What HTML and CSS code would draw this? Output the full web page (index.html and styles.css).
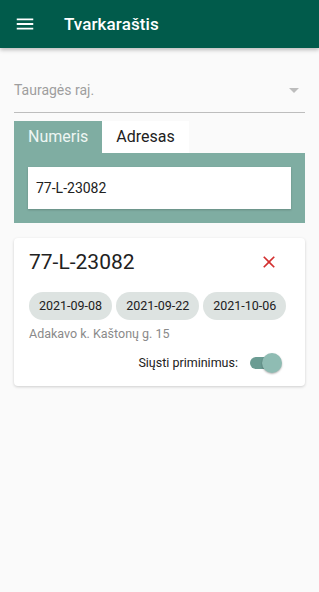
FILE: index.html
```html
<!DOCTYPE html>
<html lang="lt">
<head>
    <meta charset="UTF-8">
    <meta name="viewport" content="width=device-width, initial-scale=1.0">
    <title>Tvarkaraštis</title>
    <link rel="stylesheet" href="styles.css">
</head>
<body>
    <header class="app-bar">
        <svg class="menu-icon" viewBox="0 0 24 24" width="22" height="22">
            <path d="M3 6h18v2H3zM3 11h18v2H3zM3 16h18v2H3z" fill="#fff"/>
        </svg>
        <h1>Tvarkaraštis</h1>
    </header>

    <main class="content">
        <!-- Region select -->
        <div class="select">
            <span class="select-value">Tauragės raj.</span>
            <span class="select-arrow"></span>
        </div>

        <!-- Search tabs -->
        <div class="tabs">
            <div class="tab active">Numeris</div>
            <div class="tab">Adresas</div>
        </div>
        <div class="tab-panel">
            <div class="search-input">77-L-23082</div>
        </div>

        <!-- Result card -->
        <div class="card">
            <div class="card-head">
                <h2>77-L-23082</h2>
                <svg class="close-icon" viewBox="0 0 24 24" width="20" height="20">
                    <path d="M19 6.41L17.59 5 12 10.59 6.41 5 5 6.41 10.59 12 5 17.59 6.41 19 12 13.41 17.59 19 19 17.59 13.41 12z" fill="#d32f2f"/>
                </svg>
            </div>
            <div class="chips">
                <span class="chip">2021-09-08</span>
                <span class="chip">2021-09-22</span>
                <span class="chip">2021-10-06</span>
            </div>
            <div class="address">Adakavo k. Kaštonų g. 15</div>
            <div class="reminder">
                <span>Siųsti priminimus:</span>
                <span class="switch"><span class="switch-thumb"></span></span>
            </div>
        </div>
    </main>
</body>
</html>
```
FILE: styles.css
```css
:root {
    --primary: #015b4b;
    --tab-color: #7fada2;
    --text-color: #212121;
    --muted: #9e9e9e;
    --background: #fafafa;
}

* {
    box-sizing: border-box;
    margin: 0;
    padding: 0;
}

body {
    font-family: Roboto, "Noto Sans", sans-serif;
    color: var(--text-color);
    background: var(--background);
    min-height: 100vh;
}

.app-bar {
    height: 48px;
    background: var(--primary);
    display: flex;
    align-items: center;
    padding-left: 14px;
    box-shadow: 0 2px 4px rgba(0, 0, 0, 0.25);
}

.menu-icon {
    margin-right: 28px;
}

.app-bar h1 {
    color: #fff;
    font-size: 17px;
    font-weight: 500;
    letter-spacing: 0.1px;
}

.content {
    padding: 0 14px;
}

.select {
    margin-top: 34px;
    height: 31px;
    border-bottom: 1px solid #bdbdbd;
    display: flex;
    align-items: flex-start;
    justify-content: space-between;
}

.select-value {
    color: var(--muted);
    font-size: 14px;
    line-height: 16px;
}

.select-arrow {
    margin: 6px 6px 0 0;
    width: 0;
    height: 0;
    border-left: 5px solid transparent;
    border-right: 5px solid transparent;
    border-top: 5px solid #bdbdbd;
}

.tabs {
    margin-top: 8px;
    display: flex;
}

.tab {
    height: 32px;
    padding: 0 14px;
    font-size: 16px;
    line-height: 32px;
    background: #fff;
    color: #212121;
}

.tab.active {
    background: var(--tab-color);
    color: #eef6f3;
}

.tab-panel {
    background: var(--tab-color);
    padding: 14px;
}

.search-input {
    background: #fff;
    height: 42px;
    padding: 0 8px;
    font-size: 14px;
    line-height: 42px;
    box-shadow: 0 1px 2px rgba(0, 0, 0, 0.2);
}

.card {
    margin-top: 15px;
    background: #fff;
    border-radius: 4px;
    box-shadow: 0 1px 3px rgba(0, 0, 0, 0.18);
    padding: 10px 14px 16px 15px;
}

.card-head {
    display: flex;
    align-items: center;
    justify-content: space-between;
    padding-right: 12px;
}

.card-head h2 {
    font-size: 21px;
    font-weight: 400;
    line-height: 28px;
}

.chips {
    display: flex;
    gap: 4px;
    margin-top: 16px;
}

.chip {
    background: #dde3e1;
    border-radius: 14px;
    height: 28px;
    padding: 0 10px;
    font-size: 12.5px;
    line-height: 28px;
    color: #212121;
}

.address {
    margin-top: 6px;
    font-size: 12.5px;
    color: #8a8a8a;
}

.reminder {
    margin-top: 14px;
    display: flex;
    align-items: center;
    justify-content: flex-end;
    gap: 12px;
    padding-right: 9px;
    font-size: 12.5px;
}

.switch {
    position: relative;
    width: 24px;
    height: 12px;
    border-radius: 6px;
    background: #6b9c93;
    margin-right: 8px;
}

.switch-thumb {
    position: absolute;
    right: -8px;
    top: -4px;
    width: 20px;
    height: 20px;
    border-radius: 50%;
    background: #8fbcb3;
    box-shadow: 0 1px 2px rgba(0, 0, 0, 0.3);
}
```
